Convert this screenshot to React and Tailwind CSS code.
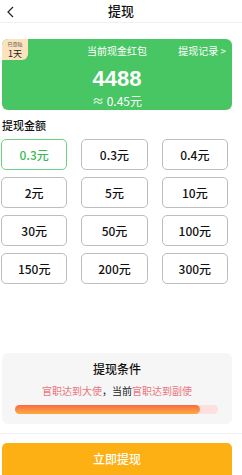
import { useState } from 'react'

const amounts = ['0.3元', '0.3元', '0.4元', '2元', '5元', '10元', '30元', '50元', '100元', '150元', '200元', '300元']

export default function App() {
  const [selected, setSelected] = useState(0)

  return (
    <div
      className="w-[242px] h-[475px] bg-white flex flex-col overflow-hidden"
      style={{ fontFamily: '"Noto Sans CJK SC", "Noto Sans", sans-serif' }}
    >
      <div className="relative h-[23px] flex items-center justify-center border-b border-[#f0f0f0]">
        <svg className="absolute left-[6px] top-[6px]" width="9" height="12" viewBox="0 0 9 12">
          <path d="M7 1 L2 6 L7 11" fill="none" stroke="#222" strokeWidth="1.2" />
        </svg>
        <span className="text-[13px] font-medium text-[#111]">提现</span>
      </div>

      <div className="mx-[2px] mt-[16px] w-[230px] h-[71px] rounded-[6px] bg-[#48c663] relative flex flex-col items-center">
        <div className="absolute left-0 top-0 w-[26px] h-[21px] bg-[#fde3bd] rounded-tl-[6px] rounded-br-[6px] flex flex-col items-center justify-center">
          <span className="text-[5px] leading-[8px] text-[#555]">已登陆</span>
          <span className="text-[9px] leading-[11px] text-[#222]">1天</span>
        </div>
        <div className="absolute right-[6px] top-[5px] text-[10px] leading-[14px] text-white">提现记录 &gt;</div>
        <div className="mt-[5px] text-[10px] leading-[14px] text-white">当前现金红包</div>
        <div className="mt-[8px] text-[22px] leading-[26px] font-bold text-white" style={{ fontFamily: '"Liberation Sans", Arial, sans-serif' }}>4488</div>
        <div className="text-[12px] leading-[17px] text-white">≈ 0.45元</div>
      </div>

      <div className="mt-[8px] px-[2px] text-[11px] leading-[15px] font-medium text-[#111]">提现金额</div>

      <div className="mt-[6px] px-[1px] grid grid-cols-3 gap-x-[14px] gap-y-[7px] w-[229px]">
        {amounts.map((a, i) => (
          <button
            key={i}
            onClick={() => setSelected(i)}
            className={`h-[31px] rounded-[5px] border flex items-center justify-center text-[12px] font-medium ${
              selected === i ? 'border-[#6fd184] text-[#3bba55]' : 'border-[#bdbdbd] text-[#111]'
            }`}
          >
            {a}
          </button>
        ))}
      </div>

      <div className="mt-auto mx-[2px] w-[230px] h-[71px] rounded-[6px] bg-[#f6f6f6] flex flex-col items-center">
        <div className="mt-[8px] text-[12px] leading-[16px] font-medium text-[#111]">提现条件</div>
        <div className="mt-[7px] text-[10px] leading-[14px] text-[#e9737b]">
          官职达到大使<span className="text-[#222]">，当前</span>官职达到副使
        </div>
        <div className="mt-[7px] w-[203px] h-[9px] rounded-full bg-[#fde0df] self-start ml-[13px]">
          <div className="h-full w-[185px] rounded-full bg-gradient-to-b from-[#f86a45] to-[#fbab3c]" />
        </div>
      </div>

      <div className="mt-[9px] border-t border-[#f3f3f3]" />
      <button className="mt-[9px] mx-[2px] w-[230px] h-[32px] rounded-t-[5px] bg-[#fdb014] text-white text-[12px] font-medium">
        立即提现
      </button>
    </div>
  )
}
